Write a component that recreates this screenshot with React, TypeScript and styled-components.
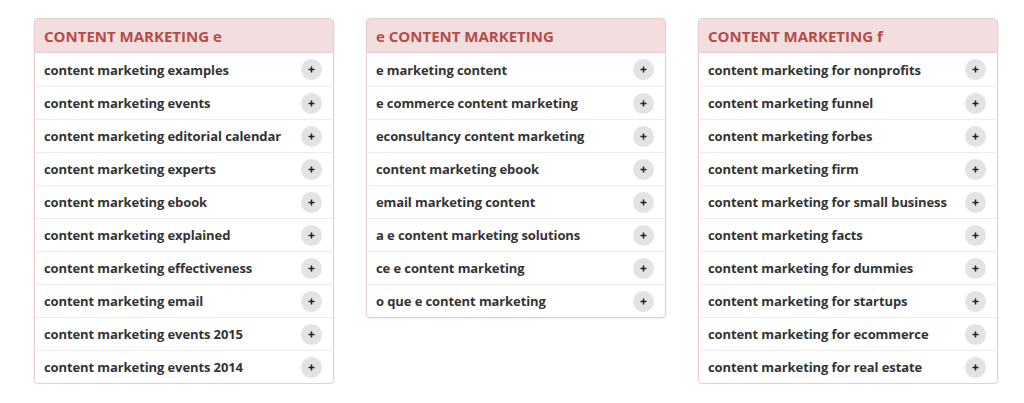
import React from "react";
import styled, { createGlobalStyle } from "styled-components";

const Global = createGlobalStyle`
  html, body { margin: 0; padding: 0; background: #fff; }
  body { font-family: "Open Sans", "DejaVu Sans", sans-serif; }
`;

const Page = styled.div`
  display: flex;
  align-items: flex-start;
  gap: 32px;
  padding: 18px 0 0 34px;
`;

const Panel = styled.div`
  width: 300px;
  box-sizing: border-box;
  border: 1px solid #ebccd1;
  border-radius: 4px;
  background: #fff;
  box-shadow: 0 1px 2px rgba(0, 0, 0, 0.08);
  overflow: hidden;
`;

const Header = styled.div`
  height: 33px;
  display: flex;
  align-items: center;
  padding: 0 9px;
  background: #f2dede;
  color: #b94a48;
  font-weight: 700;
  font-size: 15px;
  letter-spacing: 0;
  border-bottom: 1px solid #ebccd1;
`;

const Row = styled.div`
  height: 33px;
  box-sizing: border-box;
  display: flex;
  align-items: center;
  justify-content: space-between;
  padding: 0 11px 0 9px;
  color: #333;
  font-weight: 700;
  font-size: 13px;
  letter-spacing: -0.1px;
  & + & { border-top: 1px solid #ececec; }
`;

const Plus = styled.span`
  width: 21px;
  height: 21px;
  border-radius: 50%;
  background: #e3e3e3;
  display: flex;
  align-items: center;
  justify-content: center;
  flex-shrink: 0;
`;

const columns: { title: string; items: string[] }[] = [
  {
    title: "CONTENT MARKETING e",
    items: [
      "content marketing examples",
      "content marketing events",
      "content marketing editorial calendar",
      "content marketing experts",
      "content marketing ebook",
      "content marketing explained",
      "content marketing effectiveness",
      "content marketing email",
      "content marketing events 2015",
      "content marketing events 2014",
    ],
  },
  {
    title: "e CONTENT MARKETING",
    items: [
      "e marketing content",
      "e commerce content marketing",
      "econsultancy content marketing",
      "content marketing ebook",
      "email marketing content",
      "a e content marketing solutions",
      "ce e content marketing",
      "o que e content marketing",
    ],
  },
  {
    title: "CONTENT MARKETING f",
    items: [
      "content marketing for nonprofits",
      "content marketing funnel",
      "content marketing forbes",
      "content marketing firm",
      "content marketing for small business",
      "content marketing facts",
      "content marketing for dummies",
      "content marketing for startups",
      "content marketing for ecommerce",
      "content marketing for real estate",
    ],
  },
];

const PlusIcon = () => (
  <svg width="7" height="7" viewBox="0 0 7 7">
    <path d="M3.5 0.5v6M0.5 3.5h6" stroke="#222" strokeWidth="1.5" />
  </svg>
);

export default function App() {
  return (
    <>
      <Global />
      <Page>
        {columns.map((c) => (
          <Panel key={c.title}>
            <Header>{c.title}</Header>
            {c.items.map((it, i) => (
              <Row key={i}>
                <span>{it}</span>
                <Plus>
                  <PlusIcon />
                </Plus>
              </Row>
            ))}
          </Panel>
        ))}
      </Page>
    </>
  );
}
